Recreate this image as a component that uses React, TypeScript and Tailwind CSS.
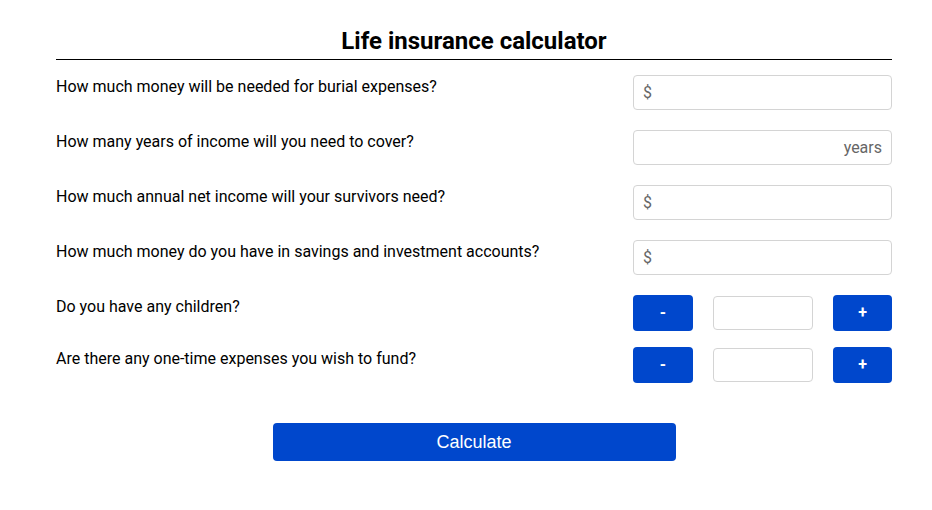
import { useState } from "react";

const fieldRows = [
  { label: "How much money will be needed for burial expenses?", prefix: "$" },
  { label: "How many years of income will you need to cover?", suffix: "years" },
  { label: "How much annual net income will your survivors need?", prefix: "$" },
  { label: "How much money do you have in savings and investment accounts?", prefix: "$" },
];

const stepRows = [
  "Do you have any children?",
  "Are there any one-time expenses you wish to fund?",
];

const Stepper = () => {
  const [val, setVal] = useState("");
  return (
    <div className="flex items-center justify-between w-[259px]">
      <button className="w-[60px] h-[36px] rounded-[4px] bg-[#0047cc] text-white font-bold text-[16px]">-</button>
      <input
        value={val}
        onChange={(e) => setVal(e.target.value)}
        className="w-[100px] h-[34px] rounded-[4px] border border-[#d4d4d4] outline-none"
      />
      <button className="w-[59px] h-[36px] rounded-[4px] bg-[#0047cc] text-white font-bold text-[16px]">+</button>
    </div>
  );
};

export default function App() {
  return (
    <div className="min-h-screen bg-white pl-14 pr-10 pt-[27px] font-['Roboto',sans-serif] text-black">
      <h1 className="text-center text-[24px] leading-[28px] font-bold pb-[4px] border-b border-black">
        Life insurance calculator
      </h1>

      <div className="mt-[15px] flex flex-col gap-[20px]">
        {fieldRows.map((row) => (
          <div key={row.label} className="flex items-start justify-between">
            <label className="text-[16px] leading-[24px]">{row.label}</label>
            <div className="w-[259px] h-[35px] rounded-[4px] border border-[#d4d4d4] flex items-center px-[9px] text-[16px] text-[#666]">
              {row.prefix && <span>{row.prefix}</span>}
              {row.suffix && <span className="ml-auto">{row.suffix}</span>}
            </div>
          </div>
        ))}
      </div>

      <div className="mt-[20px] flex flex-col gap-[16px]">
        {stepRows.map((label) => (
          <div key={label} className="flex items-start justify-between">
            <label className="text-[16px] leading-[24px]">{label}</label>
            <Stepper />
          </div>
        ))}
      </div>

      <div className="mt-[40px] flex justify-center">
        <button className="w-[403px] h-[38px] rounded-[4px] bg-[#0047cc] text-white text-[18px] font-['Liberation_Sans',Arial,sans-serif]">
          Calculate
        </button>
      </div>
    </div>
  );
}
